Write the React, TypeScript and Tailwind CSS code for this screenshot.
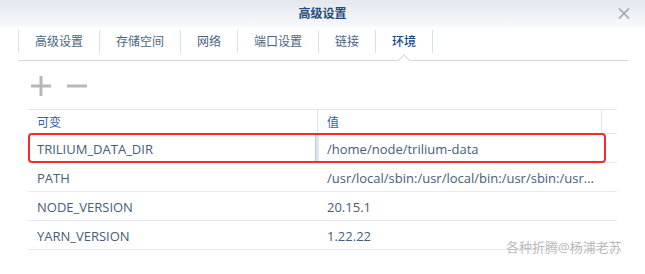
const tabs = ['高级设置', '存储空间', '网络', '端口设置', '链接', '环境']

const rows = [
  { name: 'TRILIUM_DATA_DIR', value: '/home/node/trilium-data' },
  { name: 'PATH', value: '/usr/local/sbin:/usr/local/bin:/usr/sbin:/usr...' },
  { name: 'NODE_VERSION', value: '20.15.1' },
  { name: 'YARN_VERSION', value: '1.22.22' },
]

export default function App() {
  return (
    <div className="relative w-[645px] h-[274px] overflow-hidden bg-white font-['Open_Sans','Noto_Sans_CJK_SC',sans-serif]">
      {/* 标题栏 */}
      <div className="grid grid-cols-[1fr_auto_1fr] items-center h-[27px] bg-gradient-to-b from-[#e3e8ef] to-[#f8f9fb]">
        <div />
        <span className="text-[12px] font-bold text-[#1f4c7d] leading-none">高级设置</span>
        <div className="flex justify-end pr-[15px]">
          <svg width="12" height="11" viewBox="0 0 12 11">
            <path d="M1 0.5 L11 10.5 M11 0.5 L1 10.5" stroke="#a3a8ad" strokeWidth="1.7" />
          </svg>
        </div>
      </div>

      {/* 标签页 */}
      <div className="flex items-start mt-[3px] ml-[18px] mr-[17px] h-[31px] border-b border-[#d4d9df]">
        {tabs.map((t, i) => {
          const active = i === tabs.length - 1
          return (
            <div
              key={t}
              className={`relative h-[23px] flex items-center px-4 border-l border-[#d8e0e9] text-[12px] leading-none ${
                active ? 'border-r text-[#1c4b7e] font-medium' : 'text-[#4a6482]'
              }`}
            >
              {t}
              {active && (
                <span className="absolute left-1/2 top-[26px] w-[9px] h-[9px] -translate-x-1/2 rotate-45 bg-white border-l border-t border-[#d4d9df]" />
              )}
            </div>
          )
        })}
      </div>

      {/* 工具栏 */}
      <div className="flex gap-[16px] h-[48px] pt-[15px] pl-[31px]">
        <svg width="20" height="20" viewBox="0 0 20 20">
          <path d="M0 10 H20 M10 0 V20" stroke="#b4b8bd" strokeWidth="3" />
        </svg>
        <svg width="20" height="20" viewBox="0 0 20 20">
          <path d="M0 10 H20" stroke="#b4b8bd" strokeWidth="3" />
        </svg>
      </div>

      {/* 表格 */}
      <div className="ml-[28px] w-[589px] text-[13px]">
        <div className="grid grid-cols-[290px_284px_15px] h-[25px] border-t border-b border-[#dfe5ec] text-[12px] text-[#33629a]">
          <div className="flex items-center pt-[3px] pl-[9px] border-r border-[#dfe5ec]">可变</div>
          <div className="flex items-center pt-[3px] pl-[9px] border-r border-[#dfe5ec]">值</div>
          <div />
        </div>
        {rows.map((r, i) => (
          <div
            key={r.name}
            className="relative grid grid-cols-[290px_284px_15px] h-[29px] border-b border-[#e6eaef] text-[#465d7a]"
          >
            <div className="flex items-center pt-[3px] pl-[9px]">{r.name}</div>
            {i === 0 ? (
              <div className="flex ml-[-3px] border-l border-[#c3cad2]">
                <div className="flex items-center pt-[3px] w-full border-l-[3px] border-[#dbe6f3] pl-[8px]">{r.value}</div>
              </div>
            ) : (
              <div className="flex items-center pt-[3px] pl-[9px] whitespace-nowrap">{r.value}</div>
            )}
            <div />
            {i === 0 && (
              <div className="absolute left-0 top-[-1px] right-[11px] bottom-[-1px] border-[2.5px] border-[#f52a2a] rounded-[4px]" />
            )}
          </div>
        ))}
      </div>

      {/* 水印 */}
      <div className="absolute left-[506px] top-[238px] text-[13px] text-[#b9b9b9] leading-[18px] whitespace-nowrap">
        各种折腾@杨浦老苏
      </div>
    </div>
  )
}
